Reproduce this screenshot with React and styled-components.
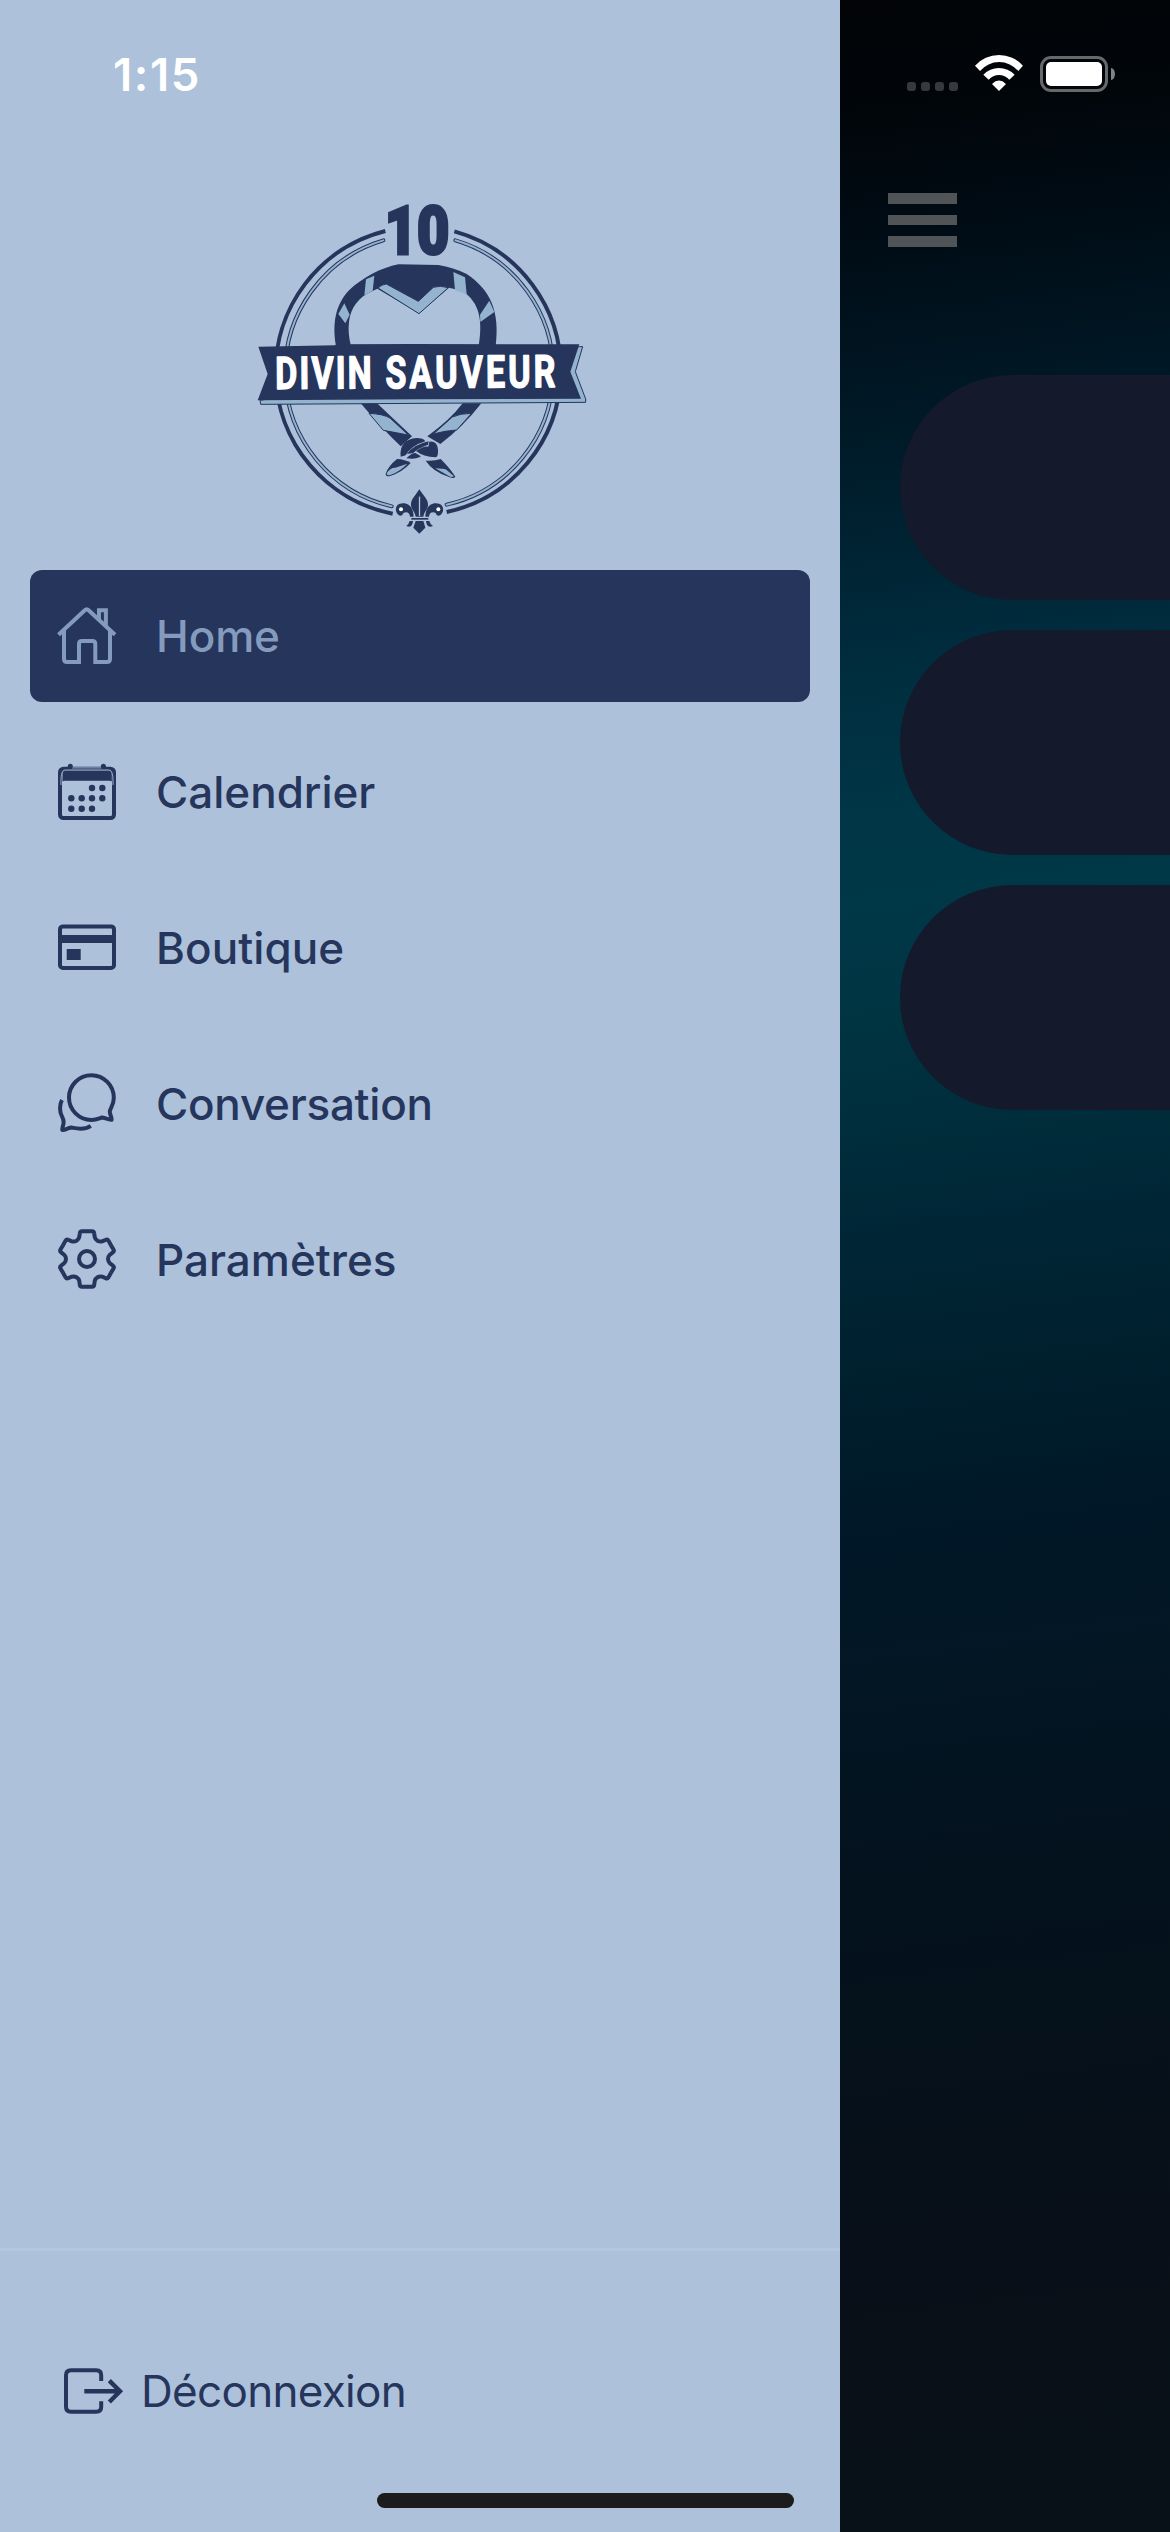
import React from 'react';
import styled, { createGlobalStyle } from 'styled-components';

const NAVY = '#26355c';
const SKY = '#adc1da';
const TRIM = '#93b3cf';

const GlobalStyle = createGlobalStyle`
  * { box-sizing: border-box; }
  html, body { margin: 0; padding: 0; background: #080f18; }
  body { font-family: Inter, "Liberation Sans", sans-serif; }
  svg { display: block; flex: none; overflow: visible; }
`;

const Screen = styled.div`
  display: flex;
  width: 1170px;
  height: 2532px;
  overflow: hidden;
`;

const Drawer = styled.aside`
  flex: none;
  display: flex;
  flex-direction: column;
  width: 840px;
  height: 100%;
  background: ${SKY};
  color: ${NAVY};
`;

const Time = styled.div`
  height: 190px;
  padding: 47px 0 0 113px;
  color: #fff;
  font-size: 45.5px;
  font-weight: 600;
  line-height: 55px;
  letter-spacing: ${(p) => p.$tracking}px;
`;

const LogoArea = styled.div`
  height: 380px;
  padding-left: 240px;
`;

const Menu = styled.nav`
  display: flex;
  flex-direction: column;
  gap: 24px;
  padding: 0 30px;
`;

const MenuItem = styled.a`
  display: flex;
  align-items: center;
  gap: 39px;
  height: 132px;
  padding-left: 27px;
  border-radius: 12px;
  background: ${(p) => (p.$active ? NAVY : 'transparent')};
  color: ${(p) => (p.$active ? '#849bbd' : NAVY)};
`;

const Label = styled.span`
  font-size: 44px;
  font-weight: ${(p) => p.$weight || 500};
  line-height: 56px;
  letter-spacing: ${(p) => p.$tracking}px;
  white-space: nowrap;
`;

const Footer = styled.footer`
  display: flex;
  flex-direction: column;
  height: 284px;
  margin-top: auto;
  border-top: 3px solid #b5c6e0;
`;

const Logout = styled.a`
  display: flex;
  align-items: center;
  gap: 17px;
  padding: 112px 0 0 64px;
`;

const HomeIndicator = styled.div`
  width: 417px;
  height: 15px;
  margin: auto 0 24px 377px;
  border-radius: 8px;
  background: #1c1c1c;
`;

const Content = styled.main`
  flex: none;
  display: flex;
  flex-direction: column;
  width: 330px;
  height: 100%;
  overflow: hidden;
  background: linear-gradient(
    173deg,
    #020406 0px, #01060b 130px, #000c15 240px, #001521 360px, #001b29 450px,
    #002434 560px, #002e3f 680px, #003545 800px, #003848 900px, #003441 1020px,
    #002d3b 1130px, #002636 1230px, #002230 1330px, #001c2b 1440px,
    #001727 1530px, #031624 1680px, #03121e 1840px, #05111b 2020px,
    #080f18 2240px, #091118 2532px
  );
`;

const StatusIcons = styled.div`
  display: flex;
  align-items: flex-start;
  height: 193px;
  padding: 55px 0 0 67px;
`;

const Dots = styled.div`
  display: flex;
  gap: 5px;
  margin: 27px 17px 0 0;
`;

const Dot = styled.i`
  width: 9px;
  height: 9px;
  border-radius: 3px;
  background: #38393d;
`;

const Battery = styled.div`
  width: 68px;
  height: 36px;
  margin: 1px 3px 0 17px;
  padding: 3px;
  border: 3px solid #66696c;
  border-radius: 11px;
`;

const Charge = styled.div`
  height: 100%;
  border-radius: 5px;
  background: #fff;
`;

const Nub = styled.i`
  width: 4px;
  height: 12px;
  margin-top: 13px;
  border-radius: 0 4px 4px 0 / 0 6px 6px 0;
  background: #808386;
`;

const Burger = styled.div`
  display: flex;
  flex-direction: column;
  gap: 11px;
  width: 69px;
  height: 182px;
  margin-left: 48px;
`;

const Bar = styled.i`
  height: 10.5px;
  background: #505457;
`;

const Cards = styled.div`
  display: flex;
  flex-direction: column;
  gap: 30px;
  padding-left: 60px;
`;

const Card = styled.div`
  width: 990px;
  height: 225px;
  border-radius: 113px;
  background: #14192b;
`;

function Icon({ children }) {
  return (
    <svg width="60" height="60" viewBox="0 0 60 60" fill="none" stroke="currentColor" strokeWidth="4">
      {children}
    </svg>
  );
}

const HouseIcon = () => (
  <Icon>
    <path d="M1.5 28.8 27.8 4.2Q29.7 2.4 31.6 4.2L58 28.8" />
    <path d="M7 24.5V53Q7 56 10 56H22V38Q22 35 25 35H35.3Q38.3 35 38.3 38V56H50Q53 56 53 53V24.5" />
    <path d="M42 14V4.3H48.9V20" />
  </Icon>
);

const CalendarIcon = () => (
  <Icon>
    <rect x="3" y="6.7" width="54" height="49.3" rx="3.5" />
    <path d="M5.5 19.5V8.7H54.8V19.5Q54 18.7 52.5 18.7H8Q6.3 18.7 5.5 19.5Z" fill="currentColor" stroke="none" />
    <path d="M3.9 23C3.9 15 4.2 8 8.3 8H51.7C55.8 8 56.1 15 56.1 23M15 5.9H44.5" stroke={SKY} strokeWidth="0.9" />
    <g fill="currentColor" stroke="none">
      <circle cx="13.3" cy="4.3" r="2.5" />
      <circle cx="46.4" cy="4.3" r="2.5" />
      {[[35, 26], [45.3, 26], [14.3, 36.3], [24.7, 36.3], [35, 36.3], [45.3, 36.3], [14.3, 46.7], [24.7, 46.7], [35, 46.7]].map(
        ([x, y]) => <circle key={`${x}-${y}`} cx={x} cy={y} r="3.2" />
      )}
    </g>
  </Icon>
);

const CardIcon = () => (
  <Icon>
    <rect x="3" y="8.4" width="54" height="41.6" rx="3" />
    <path d="M3 21H57" strokeWidth="8" />
    <path d="M9.7 31H23.7V42H9.7Z" fill="currentColor" stroke="none" />
  </Icon>
);

const ChatIcon = () => (
  <Icon>
    <path
      strokeLinejoin="round"
      d="M34.4 46A22.4 22.4 0 1 1 56.8 23.7C56.8 32 52.8 34.5 52.8 37.8C52.8 40.5 55 43.5 54.6 45.8C51 46 47.5 43.6 45 43.5C42 44.5 39 46 34.4 46Z"
    />
    <path
      strokeLinejoin="round"
      d="M5 26C2.6 30 2.2 38 5 42.5C6 44.5 7 46 6.6 49C6.2 52 5 53.5 5.3 56C9 56 11.5 53.6 14.5 53.5C18 54 26 57 33.8 51.8"
    />
  </Icon>
);

const GearIcon = () => (
  <Icon>
    <g transform="translate(30 29)">
      <circle r="8" />
      {[0, 60, 120, 180, 240, 300].map((a) => (
        <path
          key={a}
          transform={`rotate(${a})`}
          d="M-.3-27.7H5Q7-27.7 7.2-25.7L7.7-22Q8.3-19.5 10.5-18.2Q12.7-17 15.2-17.7L18.66-19.1Q20.5-19.9 21.5-18.2L24-13.85"
        />
      ))}
    </g>
  </Icon>
);

const LogoutIcon = () => (
  <svg width="60" height="46" viewBox="0 0 60 46" fill="none" stroke="currentColor" strokeWidth="4">
    <path d="M37.2 13V7.3Q37.2 2.3 32.2 2.3H7Q2 2.3 2 7.3V38.7Q2 43.7 7 43.7H32.2Q37.2 43.7 37.2 38.7V33.3" />
    <path d="M20.3 23.3H56M45.3 12.6 56 23.3 45.3 34" strokeWidth="4.4" />
  </svg>
);

const WifiIcon = () => (
  <svg width="48.3" height="36.3" viewBox="285 75 145 109" fill="#fff">
    <path d="M285 107A97 97 0 0 1 429 107L415 123A75 75 0 0 0 300 123Z" />
    <path d="M310 134A65 65 0 0 1 404 134L388 149A41 41 0 0 0 326 149Z" />
    <path d="M336 162Q357 141 378 162L357 183Z" />
  </svg>
);

const Logo = () => (
  <svg width="360" height="350" viewBox="0 0 1080 1050">
    <g fill="none" stroke={NAVY} strokeWidth="12">
      <path d="M436 123A434.5 434.5 0 0 0 458 971M643 124A433.5 433.5 0 0 1 620 966" />
      <g strokeLinecap="round">
        <path d="M430 151A413 413 0 0 0 455 949M646 151A410 410 0 0 1 620 944" strokeWidth="12" />
        <path d="M430 151A413 413 0 0 0 455 949M646 151A410 410 0 0 1 620 944" stroke={TRIM} strokeWidth="6" />
      </g>
    </g>

    <g fill={NAVY}>
      <path d="M288 468C277 405 284 345 328 300C365 265 425 232 475 223L595 225Q640 232 680 252C752 300 780 365 767 468H716C724 420 722 385 712 358Q698 320 665 302L627 293L537 370L412 296L398 303C355 320 332 355 327 395Q323 430 333 468Z" />
      <path d="M362 640H411L516 739L482 769Q430 720 362 640Z" />
      <path d="M668 640H724Q670 710 601 762L562 739Q630 690 668 640Z" />
    </g>
    <g fill={TRIM}>
      <path d="M378 268 403 257 398 303 373 316Z" />
      <path d="M313 340 329 374 316 400 295 372Z" />
      <path d="M640 246 675 262 680 313 645 301Z" />
      <path d="M748 332 763 366 721 396 720 374Z" />
      <path d="M414 294Q425 283 439 282L535 334L580 292Q600 285 625 293L537 371Z" stroke={NAVY} strokeWidth="3" />
      <path d="M387 670Q430 672 450 684L505 735L430 721Z" stroke={NAVY} strokeWidth="3" />
      <path d="M637 681Q660 670 695 670L650 720Q615 722 580 732Z" stroke={NAVY} strokeWidth="3" />
    </g>

    <g fill={NAVY}>
      <path d="M482 800Q477 748 530 744Q550 744 556 754Q515 766 497 796Z" />
      <path d="M501 792Q520 764 566 754L564 764Q528 778 520 789Z" />
      <path d="M568 755Q592 752 594 779Q595 800 587 802Q550 800 528 783Q552 768 565 770Z" />
      <path d="M499 805Q515 789 526 789L543 799Q530 809 499 805Z" />
      <path d="M471 807Q495 808 512 819Q487 846 451 858Q437 861 437 851Q445 828 471 807Z" />
      <path d="M557 812Q583 814 602 807Q630 835 646 860Q642 867 629 862Q578 845 557 812Z" />
    </g>
    <path d="M440 850Q449 833 466 833L502 821Q481 844 451 855Q440 858 440 850Z" fill={TRIM} />
    <path d="M586 835Q610 836 619 839L641 858Q637 864 625 857Z" fill={TRIM} />

    <path d="M1018 470H1028L1006 545L1037 627V637L62 643L60 631Z" fill={TRIM} stroke={NAVY} strokeWidth="3" />
    <path d="M55 470 285 466 290 463 520 462 1018 463 991 545 1023 626 530 628 53 631 83 552Z" fill={NAVY} />

    <text
      x="106"
      y="597"
      fill="#fff"
      stroke="#fff"
      strokeWidth="4"
      strokeLinejoin="round"
      fontFamily="Roboto, sans-serif"
      fontWeight="700"
      fontSize="135"
      letterSpacing="12"
      wordSpacing="4"
      textLength="850"
      lengthAdjust="spacingAndGlyphs"
      transform="rotate(-.4 107 599)"
    >
      <tspan letterSpacing="8">DIVIN </tspan>
      <tspan>SAUVEUR</tspan>
    </text>

    <text
      x="434"
      y="191"
      fill={NAVY}
      stroke={NAVY}
      strokeWidth="9"
      fontFamily="Roboto, sans-serif"
      fontWeight="900"
      fontSize="201"
      textLength="194"
      lengthAdjust="spacingAndGlyphs"
    >
      10
    </text>

    <g fill={NAVY}>
      <path d="M538 898C523 921 512 929 513 946C514 960 526 966 527 980H550C551 966 563 960 564 946C565 929 553 921 538 898Z" />
      <path d="M521 980C520 955 509 940 489 940C469 940 463 957 471 970C477 980 487 979 490 969C501 963 510 970 510 980Z" />
      <path d="M556 980C557 955 568 940 588 940C608 940 614 957 606 970C600 980 590 979 587 969C576 963 567 970 567 980Z" />
      <path d="M514 984H565V989H514Z" />
      <path d="M527 993H550L556 1013L538 1031L520 1013Z" />
      <path d="M519 993Q517 1016 499 1008L505 1002L509 993ZM558 993Q560 1016 579 1008L572 1002L568 993Z" />
    </g>
    <path d="M536.5 920H540.5V978H536.5Z" fill={SKY} />
    <circle cx="483" cy="958" r="6" fill="#fff" />
    <circle cx="595" cy="958" r="6" fill="#fff" />
  </svg>
);

const items = [
  { label: 'Home', icon: HouseIcon, tracking: -0.1, active: true },
  { label: 'Calendrier', icon: CalendarIcon, tracking: 0 },
  { label: 'Boutique', icon: CardIcon, tracking: 0.1 },
  { label: 'Conversation', icon: ChatIcon, tracking: -0.25 },
  { label: 'Paramètres', icon: GearIcon, tracking: 0 },
];

export default function App() {
  return (
    <Screen>
      <GlobalStyle />
      <Drawer>
        <Time $tracking={1.6}>1:15</Time>
        <LogoArea>
          <Logo />
        </LogoArea>
        <Menu>
          {items.map(({ label, icon: ItemIcon, tracking, active }) => (
            <MenuItem key={label} $active={active}>
              <ItemIcon />
              <Label $tracking={tracking}>{label}</Label>
            </MenuItem>
          ))}
        </Menu>
        <Footer>
          <Logout>
            <LogoutIcon />
            <Label $weight={400} $tracking={-0.7}>Déconnexion</Label>
          </Logout>
          <HomeIndicator />
        </Footer>
      </Drawer>
      <Content>
        <StatusIcons>
          <Dots>
            <Dot /><Dot /><Dot /><Dot />
          </Dots>
          <WifiIcon />
          <Battery><Charge /></Battery>
          <Nub />
        </StatusIcons>
        <Burger>
          <Bar /><Bar /><Bar />
        </Burger>
        <Cards>
          <Card /><Card /><Card />
        </Cards>
      </Content>
    </Screen>
  );
}
